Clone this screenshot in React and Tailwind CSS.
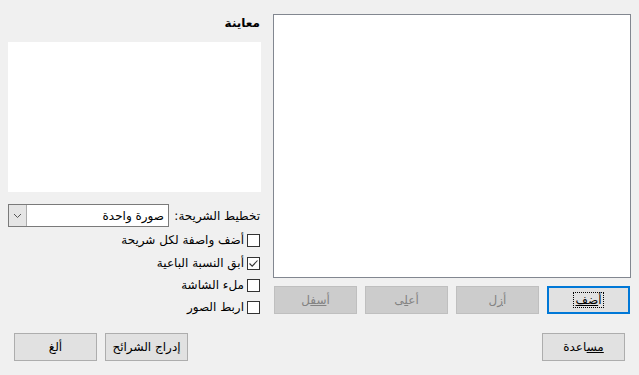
import React from "react";

const font = { fontFamily: '"DejaVu Sans", "Noto Sans", sans-serif' };

function Btn({ children, disabled, def, className = "" }) {
  let cls =
    "w-[83px] h-[28px] flex items-center justify-center text-[12px] box-border ";
  if (disabled) cls += "bg-[#cccccc] border border-[#bfbfbf] text-[#838383]";
  else if (def) cls += "bg-[#e1e1e1] border-2 border-[#0078d7] text-black";
  else cls += "bg-[#e1e1e1] border border-[#adadad] text-black";
  return <div className={cls + " " + className}>{children}</div>;
}

function Check({ checked, label }) {
  return (
    <div className="flex items-center gap-[3px] h-[13px]">
      <div className="w-[13px] h-[13px] border border-[#333333] bg-white flex items-center justify-center">
        {checked && (
          <svg width="11" height="11" viewBox="0 0 11 11">
            <path d="M1.5 5.5 L4.2 8.2 L9.5 2.5" fill="none" stroke="#333" strokeWidth="1.1" />
          </svg>
        )}
      </div>
      <span className="text-[12px] leading-[13px] text-black">{label}</span>
    </div>
  );
}

export default function App() {
  return (
    <div
      dir="rtl"
      style={font}
      className="w-[639px] h-[375px] bg-[#f0f0f0] flex flex-col overflow-hidden"
    >
      <div className="flex pt-[14px] pr-[8px] pl-[8px] gap-[12px]">
        {/* right column */}
        <div className="w-[358px] flex flex-col">
          <div className="h-[264px] bg-white border border-[#828790]" />
          <div className="flex gap-[8px] mt-[8px] px-[1px]">
            <Btn def>
              <span className="border border-dotted border-black px-[2px] leading-[14px]">
                أ<span className="underline">ضف</span>
              </span>
            </Btn>
            <Btn disabled>
              <span>
                أ<span className="underline">ز</span>ل
              </span>
            </Btn>
            <Btn disabled>
              <span>
                أع<span className="underline">ل</span>ى
              </span>
            </Btn>
            <Btn disabled>
              <span>
                أ<span className="underline">سف</span>ل
              </span>
            </Btn>
          </div>
        </div>
        {/* left column */}
        <div className="w-[253px] flex flex-col">
          <div className="h-[16px] mt-[1px] text-[12px] font-bold leading-[16px] pr-[1px]">
            معاينة
          </div>
          <div className="h-[150px] bg-white mt-[11px]" />
          <div className="flex items-center mt-[12px] h-[23px]">
            <span className="text-[12px] pr-[1px] w-[92px]">تخطيط الشريحة:</span>
            <div className="flex-1 h-[23px] bg-white border border-[#7a7a7a] flex items-center">
              <span className="flex-1 text-[12px] pr-[4px]">صورة واحدة</span>
              <div className="w-[18px] h-full bg-[#e5e5e5] border-r border-[#acacac] flex items-center justify-center">
                <svg width="9" height="6" viewBox="0 0 9 6">
                  <path d="M1 1 L4.5 4.5 L8 1" fill="none" stroke="#555" strokeWidth="1" />
                </svg>
              </div>
            </div>
          </div>
          <div className="flex flex-col gap-[9px] mt-[7px] pr-[1px]">
            <Check label="أضف واصفة لكل شريحة" />
            <div className="mt-[1px]">
              <Check checked label="أبق النسبة الباعية" />
            </div>
            <Check label="ملء الشاشة" />
            <Check label="اربط الصور" />
          </div>
        </div>
      </div>
      <div className="flex justify-between items-center mt-[19px] pr-[14px] pl-[14px]">
        <Btn>
          <span>
            <span className="underline">مس</span>اعدة
          </span>
        </Btn>
        <div className="flex gap-[8px]">
          <Btn>إدراج الشرائح</Btn>
          <Btn>ألغ</Btn>
        </div>
      </div>
    </div>
  );
}
